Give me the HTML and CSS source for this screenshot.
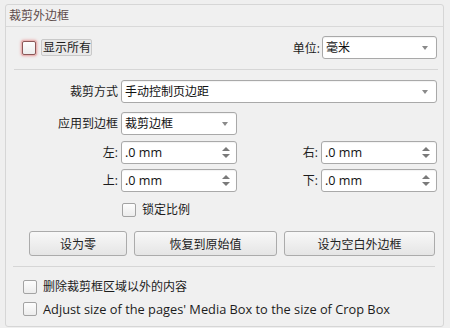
FILE: index.html
```html
<!DOCTYPE html>
<html lang="zh">
<head>
<meta charset="utf-8">
<link rel="stylesheet" href="styles.css">
</head>
<body>
<div class="frame">
  <div class="head">裁剪外边框</div>
  <div class="row1">
    <span class="box focus"></span>
    <span class="focus-label">显示所有</span>
    <span class="unit-label">单位:</span>
    <div class="select unit"><span class="val">毫米</span><i class="down"></i></div>
  </div>
  <div class="sep"></div>
  <div class="grid">
    <span class="lbl">裁剪方式</span>
    <div class="select wide"><span class="val">手动控制页边距</span><i class="down"></i></div>
    <span class="lbl">应用到边框</span>
    <div class="select"><span class="val">裁剪边框</span><i class="down"></i></div>
    <span></span><span></span>
    <span class="lbl">左:</span>
    <div class="select spin"><span class="val num">.0 mm</span><i class="updown"></i></div>
    <span class="lbl">右:</span>
    <div class="select spin"><span class="val num">.0 mm</span><i class="updown"></i></div>
    <span class="lbl">上:</span>
    <div class="select spin"><span class="val num">.0 mm</span><i class="updown"></i></div>
    <span class="lbl">下:</span>
    <div class="select spin"><span class="val num">.0 mm</span><i class="updown"></i></div>
  </div>
  <div class="lock"><span class="box"></span><span class="txt">锁定比例</span></div>
  <div class="buttons">
    <button class="btn b1">设为零</button>
    <button class="btn b2">恢复到原始值</button>
    <button class="btn b3">设为空白外边框</button>
  </div>
  <div class="sep sep2"></div>
  <div class="check first"><span class="box"></span><span class="txt">删除裁剪框区域以外的内容</span></div>
  <div class="check"><span class="box"></span><span class="txt en">Adjust size of the pages' Media Box to the size of Crop Box</span></div>
</div>
</body>
</html>
```
FILE: styles.css
```css
html, body {
  margin: 0;
  padding: 0;
  background: #efefef;
}
body {
  width: 450px;
  height: 328px;
  overflow: hidden;
  font-family: "Open Sans", "Noto Sans CJK SC", sans-serif;
  font-size: 12px;
  color: #1c1c1c;
}
.frame {
  margin: 4px 0 0 5px;
  width: 439px;
  height: 323px;
  box-sizing: border-box;
  border: 1px solid #d6d6d6;
  border-radius: 3px;
  background: #f0f0f0;
}
.head {
  height: 21px;
  line-height: 21px;
  border-bottom: 1px solid #d9d9d9;
  padding-left: 3px;
  color: #5e4b4b;
}
.row1 {
  display: flex;
  align-items: center;
  height: 23px;
  margin-top: 9px;
  padding-left: 16px;
  padding-right: 6px;
}
.box {
  display: inline-block;
  width: 14px;
  height: 14px;
  box-sizing: border-box;
  border: 1px solid #a3a3a3;
  border-radius: 2px;
  background: linear-gradient(#fdfdfd, #ececec);
  flex: none;
}
.box.focus {
  border-color: #8c5757;
  box-shadow: 0 0 0 1px #e9b5b5, 0 0 3px 1px #e7a0a0;
}
.focus-label {
  margin-left: 5px;
  width: 51px;
  height: 17px;
  box-sizing: border-box;
  border: 1px solid #c9c9c9;
  border-radius: 2px;
  background: #e9e9e9;
  line-height: 15px;
  padding-left: 1px;
}
.unit-label {
  margin-left: auto;
  margin-right: 2px;
}
.select {
  position: relative;
  height: 23px;
  box-sizing: border-box;
  border: 1px solid #a9a9a9;
  border-radius: 3px;
  background: #fff;
  box-shadow: inset 0 1px 1px rgba(0,0,0,0.05);
  line-height: 21px;
  padding-left: 3px;
  color: #111;
}
.num {
  font-size: 12.6px;
}
.select.unit {
  width: 115px;
}
.down {
  position: absolute;
  right: 8px;
  top: 9px;
  width: 0;
  height: 0;
  border-left: 3px solid transparent;
  border-right: 3px solid transparent;
  border-top: 4px solid #8a8a8a;
}
.updown {
  position: absolute;
  right: 6px;
  top: 5px;
  width: 0;
  height: 0;
  border-left: 4px solid transparent;
  border-right: 4px solid transparent;
  border-bottom: 4px solid #7a7a7a;
}
.updown::after {
  content: "";
  position: absolute;
  left: -4px;
  top: 7px;
  width: 0;
  height: 0;
  border-left: 4px solid transparent;
  border-right: 4px solid transparent;
  border-top: 4px solid #7a7a7a;
}
.sep {
  height: 1px;
  background: #d6d6d6;
  margin: 10px 5px 0 8px;
}
.grid {
  display: grid;
  grid-template-columns: 112px 116px 78px 116px;
  grid-template-rows: 32px 29px 28px 23px;
  column-gap: 3px;
  margin-top: 10px;
}
.lbl {
  text-align: right;
  line-height: 23px;
  height: 23px;
}
.wide {
  grid-column: 2 / 5;
}
.lock {
  display: flex;
  align-items: center;
  margin-top: 11px;
  padding-left: 116px;
  height: 14px;
}
.txt {
  margin-left: 6px;
  line-height: 14px;
}
.en {
  font-size: 12.8px;
}
.buttons {
  display: flex;
  gap: 7px;
  margin-top: 14px;
  padding-left: 23px;
}
.btn {
  height: 25px;
  box-sizing: border-box;
  border: 1px solid #ababab;
  border-radius: 3px;
  background: linear-gradient(#f8f8f8, #e5e5e5);
  font-family: inherit;
  font-size: 12px;
  color: #222;
  padding: 0;
}
.b1 { width: 98px; }
.b2 { width: 143px; }
.b3 { width: 151px; }
.sep2 {
  margin: 10px 8px 0 7px;
}
.check {
  display: flex;
  align-items: center;
  height: 14px;
  margin-top: 8px;
  padding-left: 17px;
}
.check.first {
  margin-top: 13px;
}
```
